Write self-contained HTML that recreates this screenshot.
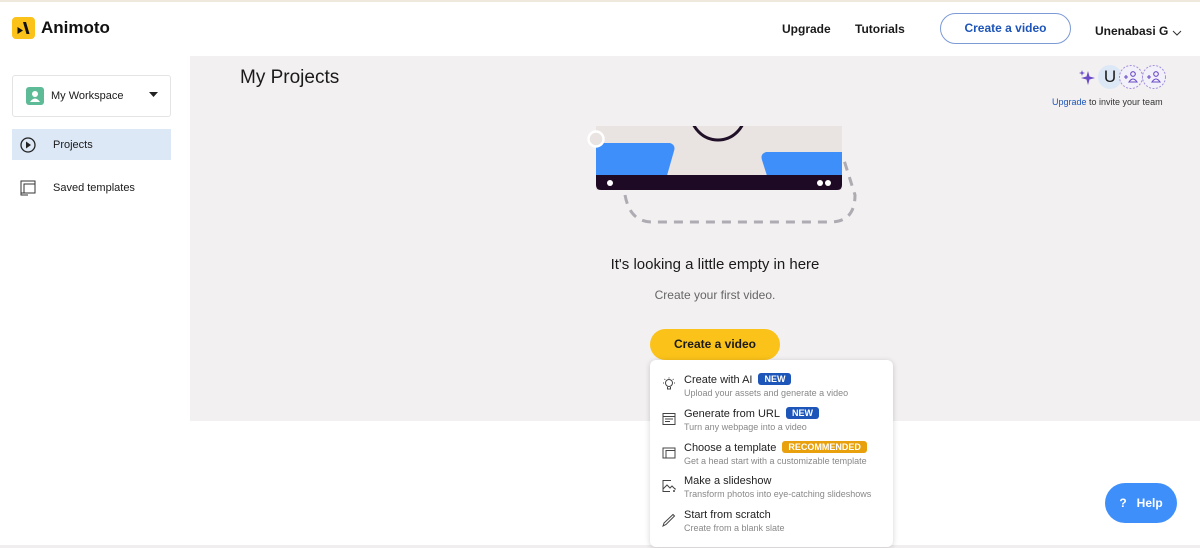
<!DOCTYPE html>
<html><head><meta charset="utf-8"><style>
*{box-sizing:border-box;margin:0;padding:0}
body{width:1200px;height:548px;background:#fff;font-family:"Liberation Sans",sans-serif;color:#1a1a1a;position:relative;overflow:hidden}
.abs{position:absolute}
.topline{left:0;top:0;width:1200px;height:2px;background:#efe8dc}
.gray{left:190px;top:56px;width:1010px;height:365px;background:#f2f0f0}
.bottomline{left:0;top:545px;width:1200px;height:3px;background:#f0eeee}
.nav{font-size:12px;font-weight:bold;color:#1a1a1a}
.menu{left:650px;top:360px;width:243px;height:187px;background:#fff;border-radius:6px;box-shadow:0 1px 6px rgba(0,0,0,.18)}
.item{position:absolute;left:34px;font-size:11px;color:#222}
.item .s{font-size:9px;color:#888;margin-top:2px}
.badge{display:inline-block;color:#fff;font-size:9px;font-weight:bold;padding:1px 6px;border-radius:3px;margin-left:6px;vertical-align:1px}
.ic{position:absolute;left:12px}
</style></head><body>
<div class="abs topline"></div>
<div class="abs gray"></div>
<div class="abs bottomline"></div>

<!-- logo -->
<div class="abs" style="left:12px;top:17px;width:23px;height:22px;background:#fbc219;border-radius:4px"></div>
<svg class="abs" style="left:12px;top:17px" width="23" height="22"><path d="M11 5 H14 L17.5 17 H14.5Z" fill="#111"/><path d="M5.5 10 L11 13.5 L5.5 17Z" fill="#111"/></svg>
<div class="abs" style="left:41px;top:18px;font-size:17px;font-weight:bold;color:#111">Animoto</div>

<div class="abs nav" style="left:782px;top:22px">Upgrade</div>
<div class="abs nav" style="left:855px;top:22px">Tutorials</div>
<div class="abs" style="left:940px;top:13px;width:131px;height:31px;border:1px solid #7c9ad6;border-radius:16px;text-align:center;line-height:29px;font-size:12px;font-weight:bold;color:#1d55b8">Create a video</div>
<div class="abs nav" style="left:1095px;top:24px">Unenabasi G</div>
<svg class="abs" style="left:1172px;top:29px" width="10" height="8"><path d="M1 2 L5 6 L9 2" stroke="#333" fill="none"/></svg>

<!-- sidebar -->
<div class="abs" style="left:12px;top:75px;width:159px;height:42px;border:1px solid #e4e4e4;border-radius:3px;background:#fff"></div>
<div class="abs" style="left:26px;top:87px;width:18px;height:18px;background:#5dbb98;border-radius:3px"></div>
<svg class="abs" style="left:26px;top:87px" width="18" height="18"><circle cx="9" cy="7" r="3" fill="#fff"/><path d="M4 15 Q9 8 14 15Z" fill="#fff"/></svg>
<div class="abs" style="left:51px;top:90px;font-size:11px">My Workspace</div>
<svg class="abs" style="left:149px;top:92px" width="9" height="6"><path d="M0 0 L9 0 L4.5 5Z" fill="#222"/></svg>
<div class="abs" style="left:12px;top:129px;width:159px;height:31px;background:#dde8f7"></div>
<svg class="abs" style="left:19px;top:136px" width="18" height="18"><circle cx="9" cy="9" r="7" stroke="#222" stroke-width="1.3" fill="none"/><path d="M7 5.5 L12 9 L7 12.5Z" fill="#222"/></svg>
<div class="abs" style="left:53px;top:139px;font-size:11px">Projects</div>
<svg class="abs" style="left:19px;top:179px" width="18" height="18"><rect x="2" y="2" width="14" height="12" stroke="#333" fill="none"/><rect x="5" y="5" width="11" height="9" stroke="#333" fill="none"/><path d="M2 14 V16 H9" stroke="#333" fill="none"/></svg>
<div class="abs" style="left:53px;top:182px;font-size:11px">Saved templates</div>

<div class="abs" style="left:240px;top:67px;font-size:19px;color:#1a1a1a">My Projects</div>

<!-- invite -->
<svg class="abs" style="left:1078px;top:69px" width="18" height="18"><path d="M10 2 L11.5 7.5 L17 9 L11.5 10.5 L10 16 L8.5 10.5 L3 9 L8.5 7.5Z" fill="#6b4bc8"/><path d="M4 1 L4.7 3.3 L7 4 L4.7 4.7 L4 7 L3.3 4.7 L1 4 L3.3 3.3Z" fill="#6b4bc8"/></svg>
<div class="abs" style="left:1098px;top:65px;width:24px;height:24px;border-radius:50%;background:#dde8f7;text-align:center;line-height:24px;font-size:17px">U</div>
<svg class="abs" style="left:1119px;top:65px" width="48" height="25">
<circle cx="12" cy="12" r="11.5" fill="#f2f0f8" stroke="#a58fdd" stroke-dasharray="2 1.5"/>
<circle cx="35" cy="12" r="11.5" fill="#f2f0f8" stroke="#a58fdd" stroke-dasharray="2 1.5"/>
<g stroke="#6b4bc8" fill="none" stroke-width="1.1">
<path d="M5 12 H9 M7 10 V14"/><circle cx="14" cy="9" r="2.3"/><path d="M10 17 Q14 11 18 17Z"/>
<path d="M28 12 H32 M30 10 V14"/><circle cx="37" cy="9" r="2.3"/><path d="M33 17 Q37 11 41 17Z"/>
</g></svg>
<div class="abs" style="left:1052px;top:97px;font-size:9px;color:#333"><span style="color:#1d55b8">Upgrade</span> to invite your team</div>

<!-- illustration -->
<svg class="abs" style="left:580px;top:115px" width="290" height="115">
<defs><clipPath id="c"><rect x="16" y="11" width="246" height="64"/></clipPath></defs>
<path d="M45 80 Q50 107 72 107 L250 107 Q275 107 275 80 L263 42" stroke="#aeabb3" stroke-width="3" stroke-dasharray="9 7" fill="none"/>
<rect x="16" y="11" width="246" height="64" fill="#e9e3e1"/>
<circle cx="138" cy="-2" r="27" stroke="#201028" stroke-width="3" fill="none" clip-path="url(#c)"/>
<path d="M16 28 L90 28 Q96 30 94 36 L86 64 L16 64Z" fill="#3f8ffb"/>
<path d="M262 37 L186 37 Q180 39 182 45 L188 64 L262 64Z" fill="#3f8ffb"/>
<path d="M16 60 H262 V70 Q262 75 257 75 H21 Q16 75 16 70Z" fill="#1e0a24"/>
<circle cx="30" cy="68" r="3" fill="#fff"/><circle cx="240" cy="68" r="3" fill="#fff"/><circle cx="248" cy="68" r="3" fill="#fff"/>
<circle cx="16" cy="24" r="7.5" fill="#e9e3e1" stroke="#fff" stroke-width="2.5"/>
</svg>

<div class="abs" style="left:0;width:1430px;top:256px;text-align:center;font-size:15px;color:#1a1a1a">It's looking a little empty in here</div>
<div class="abs" style="left:0;width:1430px;top:288px;text-align:center;font-size:12px;color:#666">Create your first video.</div>
<div class="abs" style="left:650px;top:329px;width:130px;height:31px;background:#fbc219;border-radius:16px;text-align:center;line-height:31px;font-size:12px;font-weight:bold;color:#1a1a1a">Create a video</div>

<div class="abs menu">
<svg class="ic" style="top:17px" width="14" height="14"><circle cx="7" cy="6" r="3.5" stroke="#444" fill="none"/><path d="M5.5 10 V12 H8.5 V10 M7 0.5 V1.5 M1 6 H2 M12 6 H13 M2.5 2 L3.2 2.7 M11.5 2 L10.8 2.7" stroke="#444" fill="none"/></svg>
<div class="item" style="top:13px">Create with AI<span class="badge" style="background:#1d55b8">NEW</span><div class="s">Upload your assets and generate a video</div></div>
<svg class="ic" style="top:52px" width="14" height="14"><rect x="1" y="1.5" width="12" height="11" stroke="#444" fill="none"/><path d="M1 4.5 H13 M3 7 H11 M3 9.5 H8" stroke="#444"/></svg>
<div class="item" style="top:47px">Generate from URL<span class="badge" style="background:#1d55b8">NEW</span><div class="s">Turn any webpage into a video</div></div>
<svg class="ic" style="top:86px" width="14" height="14"><rect x="1" y="2" width="12" height="10" stroke="#444" fill="none"/><rect x="4" y="4.5" width="9" height="7.5" stroke="#444" fill="none"/></svg>
<div class="item" style="top:81px">Choose a template<span class="badge" style="background:#e8a10c">RECOMMENDED</span><div class="s">Get a head start with a customizable template</div></div>
<svg class="ic" style="top:119px" width="14" height="14"><path d="M9 1.5 H1 V12.5 H8 M1 10 L5 6 L8 9 L10 7 L13 10 V9" stroke="#444" fill="none"/><circle cx="12" cy="12" r="1" fill="#444"/></svg>
<div class="item" style="top:115px">Make a slideshow<div class="s">Transform photos into eye-catching slideshows</div></div>
<svg class="ic" style="top:153px" width="14" height="14"><path d="M1 13 L2 10 L11 1.5 L12.5 3 L4 11.5Z" stroke="#444" fill="none"/></svg>
<div class="item" style="top:149px">Start from scratch<div class="s">Create from a blank slate</div></div>
</div>

<div class="abs" style="left:1105px;top:483px;width:72px;height:40px;background:#3f8ffb;border-radius:20px;color:#fff;font-size:12px;font-weight:bold;line-height:40px;text-align:center">?&nbsp;&nbsp;&nbsp;Help</div>
</body></html>
